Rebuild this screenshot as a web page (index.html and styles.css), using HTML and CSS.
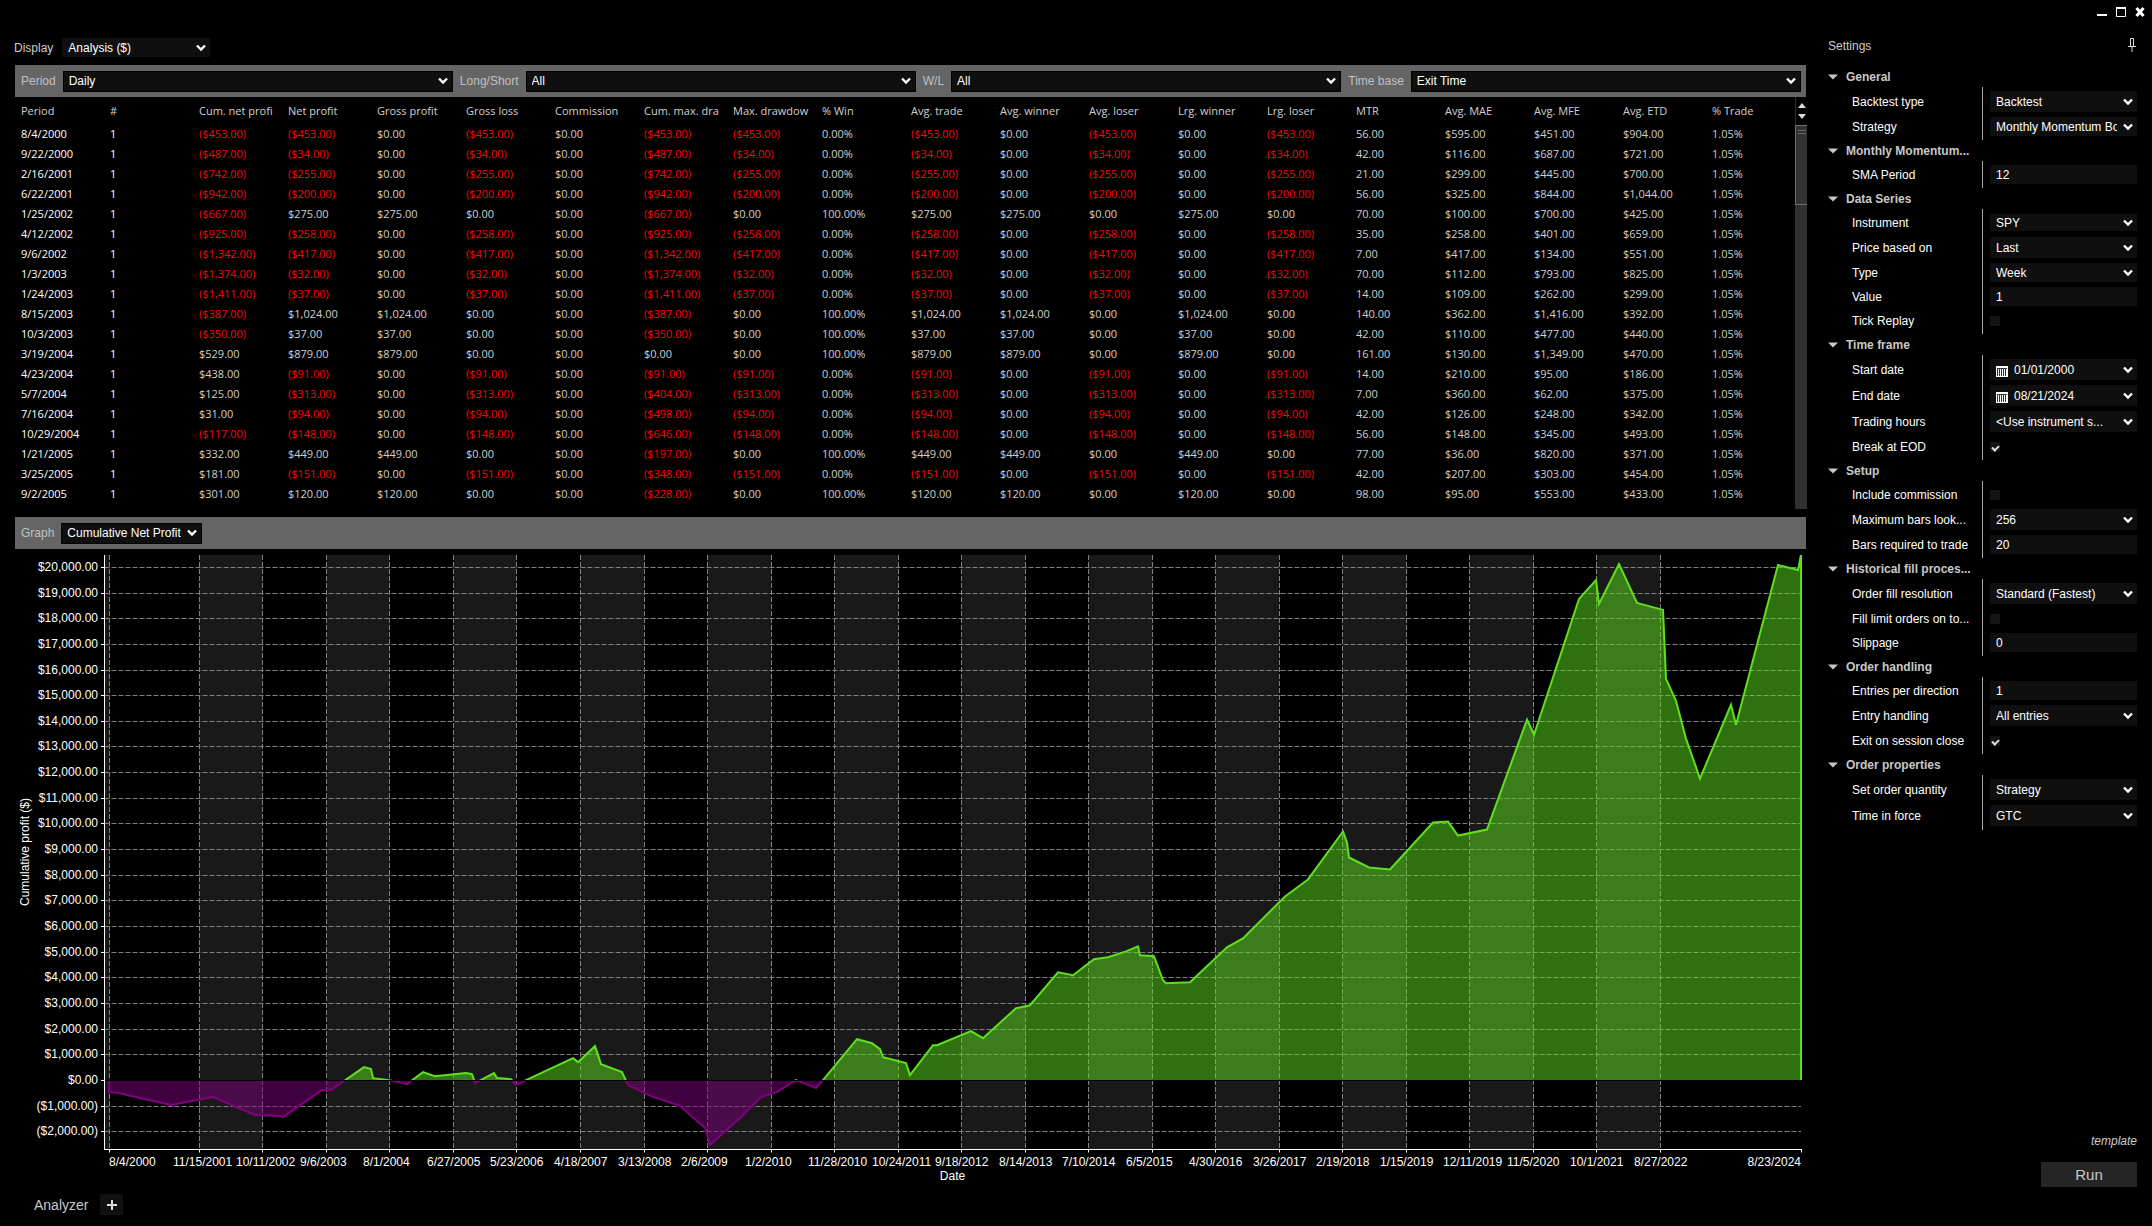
FILE: index.html
```html
<!DOCTYPE html>
<html lang="en">
<head>
<meta charset="utf-8">
<title>Analyzer</title>
<link rel="stylesheet" href="styles.css">
</head>
<body>
<svg class="sprite" aria-hidden="true">
  <symbol id="chevron" viewBox="0 0 10 8"><path d="M1 1.5 L5 5.5 L9 1.5" fill="none" stroke="#fff" stroke-width="2.4"/></symbol>
  <symbol id="triangle" viewBox="0 0 10 6"><path d="M0 .5 H10 L5 5.5 Z" fill="#c8c8c8"/></symbol>
  <symbol id="calendar" viewBox="0 0 12 11"><path d="M0 0H12V11H0Z" fill="#fff"/><path d="M1 2.5H11M1 4.5H11M1 6.5H11M1 8.5H11" stroke="#222" stroke-dasharray="1 1"/><path d="M1 3.5H11M1 5.5H11M1 7.5H11M1 9.5H11" stroke="#444" stroke-dasharray="1 1"/><path d="M1 2.5H11" stroke="#333"/></symbol>
</svg>

<header class="titlebar">
  <button class="win" aria-label="Minimize"><svg width="10" height="10"><path d="M0 8H10" stroke="#fff" stroke-width="2"/></svg></button>
  <button class="win" aria-label="Maximize"><svg width="10" height="10"><path d="M.5 .5H9.500V9.500H.5Z" fill="none" stroke="#fff"/><path d="M0 1H10" stroke="#fff" stroke-width="2"/></svg></button>
  <button class="win" aria-label="Close"><svg width="10" height="10"><path d="M1.500 1L8.500 9M8.500 1L1.500 9" stroke="#fff" stroke-width="3"/></svg></button>
</header>

<div class="layout">
  <main class="main">
    <div class="display">
      <label for="display">Display</label>
      <span class="pick display-pick"><select id="display"><option>Analysis ($)</option></select><svg><use href="#chevron"/></svg></span>
    </div>

    <div class="bar filters">
      <label for="period">Period</label>
      <span class="pick framed"><select id="period"><option>Daily</option></select><svg><use href="#chevron"/></svg></span>
      <label for="side">Long/Short</label>
      <span class="pick framed"><select id="side"><option>All</option></select><svg><use href="#chevron"/></svg></span>
      <label for="wl">W/L</label>
      <span class="pick framed"><select id="wl"><option>All</option></select><svg><use href="#chevron"/></svg></span>
      <label for="timebase">Time base</label>
      <span class="pick framed"><select id="timebase"><option>Exit Time</option></select><svg><use href="#chevron"/></svg></span>
    </div>

    <div class="results">
      <table class="trades">
        <thead><tr>
          <th>Period</th><th>#</th><th>Cum. net profi</th><th>Net profit</th><th>Gross profit</th><th>Gross loss</th><th>Commission</th><th>Cum. max. dra</th><th>Max. drawdow</th><th>% Win</th><th>Avg. trade</th><th>Avg. winner</th><th>Avg. loser</th><th>Lrg. winner</th><th>Lrg. loser</th><th>MTR</th><th>Avg. MAE</th><th>Avg. MFE</th><th>Avg. ETD</th><th>% Trade</th>
        </tr></thead>
        <tbody id="rows"></tbody>
      </table>
      <div class="scroll">
        <div class="scroll-arrows">
          <svg width="8" height="5"><path d="M0 5H8L4 0Z" fill="#ddd"/></svg>
          <svg width="8" height="5"><path d="M0 0H8L4 5Z" fill="#ddd"/></svg>
        </div>
        <div class="scroll-thumb"></div>
      </div>
    </div>

    <div class="bar graphbar">
      <label for="graph">Graph</label>
      <span class="pick framed"><select id="graph"><option>Cumulative Net Profit</option></select><svg><use href="#chevron"/></svg></span>
    </div>

    <div class="chart" id="chart"></div>

    <footer class="tabs">
      <span>Analyzer</span>
      <button class="add" aria-label="Add tab"><svg width="10" height="10"><path d="M5 0V10M0 5H10" stroke="#ddd" stroke-width="2"/></svg></button>
    </footer>
  </main>

  <aside class="settings">
    <div class="settings-head">
      <span>Settings</span>
      <svg width="8" height="14"><path d="M2.500 8V.5H5.500V8M0 8.500H8M4 9V14" fill="none" stroke="#ddd"/></svg>
    </div>

    <h2><svg><use href="#triangle"/></svg>General</h2>
    <div class="group">
      <div class="row tall"><label for="s1">Backtest type</label><span class="pick"><select id="s1"><option>Backtest</option></select><svg><use href="#chevron"/></svg></span></div>
      <div class="row"><label for="s2">Strategy</label><span class="pick"><select id="s2"><option>Monthly Momentum Bo</option></select><svg><use href="#chevron"/></svg></span></div>
    </div>

    <h2><svg><use href="#triangle"/></svg>Monthly Momentum...</h2>
    <div class="group">
      <div class="row"><label for="s3">SMA Period</label><input type="text" id="s3" value="12"></div>
    </div>

    <h2><svg><use href="#triangle"/></svg>Data Series</h2>
    <div class="group">
      <div class="row"><label for="s4">Instrument</label><span class="pick short"><select id="s4"><option>SPY</option></select><svg><use href="#chevron"/></svg></span></div>
      <div class="row tall"><label for="s5">Price based on</label><span class="pick"><select id="s5"><option>Last</option></select><svg><use href="#chevron"/></svg></span></div>
      <div class="row"><label for="s6">Type</label><span class="pick"><select id="s6"><option>Week</option></select><svg><use href="#chevron"/></svg></span></div>
      <div class="row"><label for="s7">Value</label><input type="text" id="s7" value="1"></div>
      <div class="row"><label for="s8">Tick Replay</label><input type="checkbox" id="s8"></div>
    </div>

    <h2><svg><use href="#triangle"/></svg>Time frame</h2>
    <div class="group">
      <div class="row tall"><label for="s9">Start date</label><span class="pick date"><svg class="cal"><use href="#calendar"/></svg><input type="text" id="s9" value="01/01/2000"><svg><use href="#chevron"/></svg></span></div>
      <div class="row tall"><label for="s10">End date</label><span class="pick date"><svg class="cal"><use href="#calendar"/></svg><input type="text" id="s10" value="08/21/2024"><svg><use href="#chevron"/></svg></span></div>
      <div class="row tall"><label for="s11">Trading hours</label><span class="pick"><select id="s11"><option>&lt;Use instrument s...</option></select><svg><use href="#chevron"/></svg></span></div>
      <div class="row"><label for="s12">Break at EOD</label><input type="checkbox" id="s12" checked></div>
    </div>

    <h2><svg><use href="#triangle"/></svg>Setup</h2>
    <div class="group">
      <div class="row"><label for="s13">Include commission</label><input type="checkbox" id="s13"></div>
      <div class="row tall"><label for="s14">Maximum bars look...</label><span class="pick"><select id="s14"><option>256</option></select><svg><use href="#chevron"/></svg></span></div>
      <div class="row"><label for="s15">Bars required to trade</label><input type="text" id="s15" value="20"></div>
    </div>

    <h2><svg><use href="#triangle"/></svg>Historical fill proces...</h2>
    <div class="group">
      <div class="row tall"><label for="s16">Order fill resolution</label><span class="pick"><select id="s16"><option>Standard (Fastest)</option></select><svg><use href="#chevron"/></svg></span></div>
      <div class="row"><label for="s17">Fill limit orders on to...</label><input type="checkbox" id="s17"></div>
      <div class="row"><label for="s18">Slippage</label><input type="text" id="s18" value="0"></div>
    </div>

    <h2><svg><use href="#triangle"/></svg>Order handling</h2>
    <div class="group">
      <div class="row"><label for="s19">Entries per direction</label><input type="text" id="s19" value="1"></div>
      <div class="row tall"><label for="s20">Entry handling</label><span class="pick"><select id="s20"><option>All entries</option></select><svg><use href="#chevron"/></svg></span></div>
      <div class="row"><label for="s21">Exit on session close</label><input type="checkbox" id="s21" checked></div>
    </div>

    <h2><svg><use href="#triangle"/></svg>Order properties</h2>
    <div class="group">
      <div class="row tall"><label for="s22">Set order quantity</label><span class="pick"><select id="s22"><option>Strategy</option></select><svg><use href="#chevron"/></svg></span></div>
      <div class="row tall"><label for="s23">Time in force</label><span class="pick"><select id="s23"><option>GTC</option></select><svg><use href="#chevron"/></svg></span></div>
    </div>

    <div class="actions">
      <a href="#" class="template">template</a>
      <button class="run">Run</button>
    </div>
  </aside>
</div>
<script src="app.js"></script>
</body>
</html>
```
FILE: styles.css
```css
* { box-sizing: border-box; }

body {
  margin: 0;
  min-height: 100vh;
  display: flex;
  flex-direction: column;
  background: #000;
  color: #fff;
  font: 12px/16px "Liberation Sans", Arial, sans-serif;
}

button, select, input { font: inherit; color: inherit; margin: 0; border: 0; border-radius: 0; }
button { padding: 0; background: none; display: grid; place-items: center; }
svg { display: block; }
.sprite { position: absolute; width: 0; height: 0; }

.titlebar {
  display: flex;
  justify-content: flex-end;
  align-items: center;
  gap: 9px;
  height: 24px;
  padding-right: 7px;
}

.layout {
  flex: 1;
  display: grid;
  grid-template-columns: minmax(0, 1fr) 345px;
}

.main { display: flex; flex-direction: column; padding-top: 14px; }

/* Drop-downs */
.pick { position: relative; display: block; height: 100%; background: #0f0f0f; }
.pick select, .pick input {
  display: block;
  appearance: none;
  width: 100%;
  height: 100%;
  padding: 0 20px 0 6px;
  background: none;
  overflow: hidden;
}
.pick svg { position: absolute; right: 4px; top: calc(50% - 4px); width: 10px; height: 8px; pointer-events: none; }
.pick.short { height: 17px; }
.pick.date input { padding-left: 24px; }
.pick .cal { left: 6px; top: calc(50% - 4px); width: 12px; height: 11px; }
.pick.framed { height: 21px; border: 1px solid #000; }
.pick.framed select { padding-left: 5px; }

.display { display: flex; align-items: center; gap: 9px; height: 19px; padding-left: 14px; color: #ccc; }
.display-pick { width: 148px; color: #fff; }

.bar {
  display: flex;
  align-items: center;
  gap: 7px;
  height: 32px;
  margin: 8px 1px 0 15px;
  padding: 0 5px 0 6px;
  background: #656565;
}
.bar label { color: #c0c0c0; }
.filters .pick { flex: 1; }

/* Results table */
.results { display: flex; margin-left: 15px; }
.trades {
  flex: 1;
  width: 100%;
  min-width: 0;
  align-self: flex-start;
  table-layout: fixed;
  border-collapse: collapse;
  margin-bottom: 5px;
  color: #d0d0d0;
  font: 11px/20px "Open Sans", "Noto Sans", sans-serif;
}
.trades th { height: 27px; font-weight: 400; text-align: left; }
.trades th, .trades td { padding: 0 4px 0 6px; overflow: hidden; white-space: nowrap; }
.trades td { height: 20px; }
.trades td:nth-child(-n+2) { color: #fff; }
.trades td.neg { color: #f00; }

.scroll { flex: none; width: 12px; display: flex; flex-direction: column; background: #303030; }
.scroll-arrows {
  display: flex;
  flex-direction: column;
  align-items: center;
  justify-content: space-evenly;
  height: 28px;
  background: #000;
  border-left: 1px solid #303030;
}
.scroll-thumb {
  height: 80px;
  background: linear-gradient(#666 0 0) center 4px / 8px 1px no-repeat,
              linear-gradient(#666 0 0) center 7px / 8px 1px no-repeat, #333;
  border: 1px solid #707070;
  border-right: 0;
}

/* Chart */
.chart { flex: 1; min-height: 400px; margin-top: 6px; position: relative; }
.chart svg { position: absolute; inset: 0; width: 100%; height: 100%; }
.chart text { fill: #fff; font: 12px "Liberation Sans", Arial, sans-serif; }
.band { fill: #191919; }
.grid { stroke: #808080; fill: none; stroke-dasharray: 5 2; }
.axis { stroke: #fff; fill: none; }
.zero { stroke: #000; }
.gain { fill: #5ee01e; fill-opacity: .5; stroke: #5ee01e; stroke-width: 2; }
.loss { fill: #800080; fill-opacity: .5; stroke: #800080; stroke-width: 2; }

.tabs { display: flex; align-items: center; gap: 12px; padding: 9px 0 11px 34px; font-size: 14px; color: #c8c8c8; }
.add { width: 23px; height: 21px; background: #111; }

/* Settings */
.settings { display: flex; flex-direction: column; padding: 14px 15px 39px 21px; }
.settings-head { display: flex; justify-content: space-between; height: 28px; padding-right: 1px; color: #ccc; }
.settings h2 {
  display: flex;
  align-items: center;
  gap: 8px;
  height: 21px;
  margin: 0;
  font-size: 12px;
  color: #c8c8c8;
}
.settings h2 svg { width: 10px; height: 6px; }
.group {
  display: grid;
  gap: 5px;
  padding: 4px 0;
  margin-left: 24px;
  background: linear-gradient(90deg, transparent 130px, #aaa 130px 131px, transparent 131px);
}
.row { display: grid; grid-template-columns: 138px 1fr; align-items: center; height: 19px; }
.row.tall { height: 21px; }
.row input[type="text"] { width: 100%; height: 100%; padding-left: 6px; background: #0f0f0f; }
.row .date input[type="text"] { padding-left: 24px; background: none; }
.row input[type="checkbox"] { appearance: none; width: 10px; height: 10px; background: #141414; }
.row input[type="checkbox"]:checked::after {
  content: "";
  display: block;
  width: 5px;
  height: 3px;
  margin: 3px 0 0 2px;
  border: solid #ddd;
  border-width: 0 0 2px 2px;
  transform: rotate(-45deg);
}

.actions { margin-top: auto; display: flex; flex-direction: column; align-items: flex-end; gap: 13px; }
.template { color: #ccc; font-style: italic; text-decoration: none; }
.run { width: 96px; height: 25px; background: #252525; color: #c8c8c8; font-size: 15px; }
```
FILE: app.js
```js
// period, cumulative net, net, cumulative drawdown, MTR, MAE, MFE, ETD
const trades = [
  ["8/4/2000", -453, -453, -453, 56, 595, 451, 904],
  ["9/22/2000", -487, -34, -487, 42, 116, 687, 721],
  ["2/16/2001", -742, -255, -742, 21, 299, 445, 700],
  ["6/22/2001", -942, -200, -942, 56, 325, 844, 1044],
  ["1/25/2002", -667, 275, -667, 70, 100, 700, 425],
  ["4/12/2002", -925, -258, -925, 35, 258, 401, 659],
  ["9/6/2002", -1342, -417, -1342, 7, 417, 134, 551],
  ["1/3/2003", -1374, -32, -1374, 70, 112, 793, 825],
  ["1/24/2003", -1411, -37, -1411, 14, 109, 262, 299],
  ["8/15/2003", -387, 1024, -387, 140, 362, 1416, 392],
  ["10/3/2003", -350, 37, -350, 42, 110, 477, 440],
  ["3/19/2004", 529, 879, 0, 161, 130, 1349, 470],
  ["4/23/2004", 438, -91, -91, 14, 210, 95, 186],
  ["5/7/2004", 125, -313, -404, 7, 360, 62, 375],
  ["7/16/2004", 31, -94, -498, 42, 126, 248, 342],
  ["10/29/2004", -117, -148, -646, 56, 148, 345, 493],
  ["1/21/2005", 332, 449, -197, 77, 36, 820, 371],
  ["3/25/2005", 181, -151, -348, 42, 207, 303, 454],
  ["9/2/2005", 301, 120, -228, 98, 95, 553, 433],
];

const money = (v) => {
  const s = "$" + Math.abs(v).toLocaleString("en-US", { minimumFractionDigits: 2 });
  return v < 0 ? `(${s})` : s;
};
const cash = (v) => `<td${v < 0 ? ' class="neg"' : ""}>${money(v)}</td>`;
const cell = (t) => `<td>${t}</td>`;

document.getElementById("rows").innerHTML = trades.map(([day, cum, net, dd, mtr, mae, mfe, etd]) => {
  const win = Math.max(net, 0), loss = Math.min(net, 0);
  return "<tr>" + cell(day) + cell(1) + cash(cum) + cash(net) + cash(win) + cash(loss) + cash(0) +
    cash(dd) + cash(loss) + cell(net > 0 ? "100.00%" : "0.00%") + cash(net) + cash(win) + cash(loss) +
    cash(win) + cash(loss) + cell(mtr.toFixed(2)) + cash(mae) + cash(mfe) + cash(etd) + cell("1.05%") + "</tr>";
}).join("");

// Equity curve in chart units: x 104..1801, y 0..595 measured from 555, zero profit at 1081.
const curve = `109,1093 119,1094 144,1100 171,1106 213,1098 255,1116 280,1117 283,1118 322,1091 331,1091
364,1068 371,1070 373,1079 389,1081 407,1085 423,1073 435,1077 466,1074 472,1075 475,1084 494,1074 497,1079
511,1080 516,1086 526,1081 573,1059 578,1063 595,1047 601,1065 622,1073 628,1086 651,1097 680,1107 705,1129
710,1146 740,1119 761,1098 777,1093 796,1081 816,1089 823,1081 857,1040 872,1044 880,1050 883,1058 906,1064
910,1076 933,1046 937,1046 971,1032 983,1039 1016,1009 1030,1006 1058,973 1073,976 1094,960 1108,958 1126,952
1138,947 1140,956 1154,957 1163,981 1166,984 1190,983 1227,948 1243,939 1285,897 1308,880 1343,832 1347,843
1349,858 1369,868 1390,870 1433,823 1448,822 1458,836 1487,830 1527,720 1534,735 1579,599 1596,580 1599,604
1619,564 1637,603 1663,610 1666,679 1676,701 1686,739 1700,779 1731,705 1736,725 1778,565 1798,570 1801,555`
  .trim().split(/\s+/).map((p) => p.split(",").map(Number));

const dates = ["11/15/2001", "10/11/2002", "9/6/2003", "8/1/2004", "6/27/2005", "5/23/2006", "4/18/2007",
  "3/13/2008", "2/6/2009", "1/2/2010", "11/28/2010", "10/24/2011", "9/18/2012", "8/14/2013", "7/10/2014",
  "6/5/2015", "4/30/2016", "3/26/2017", "2/19/2018", "1/15/2019", "12/11/2019", "11/5/2020", "10/1/2021", "8/27/2022"];

function drawChart() {
  const box = document.getElementById("chart");
  const W = box.clientWidth, H = box.clientHeight;
  const left = 104, right = W - 6, bottom = H - 36;
  const X = (x) => left + (x - 104) * (right - left) / 1697;
  const Y = (y) => (y - 555) * bottom / 595;
  const snap = (v) => Math.floor(v) + 0.5;
  const line = (x1, y1, x2, y2, c) => `<line x1="${x1}" y1="${y1}" x2="${x2}" y2="${y2}" class="${c}"/>`;
  const text = (x, y, s, anchor, extra = "") => `<text x="${x}" y="${y}" text-anchor="${anchor}" ${extra}>${s}</text>`;
  const zero = snap(Y(1081));
  const axis = snap(left), base = snap(bottom);
  const xs = dates.map((_, i) => snap(X(199.3 + i * 63.53)));
  let out = `<defs><clipPath id="up"><rect x="0" y="0" width="${W}" height="${zero - 0.5}"/></clipPath>
    <clipPath id="down"><rect x="0" y="${zero + 0.5}" width="${W}" height="${H}"/></clipPath></defs>`;

  const first = snap(X(109));
  out += `<rect class="band" x="${axis}" y="0" width="${first - axis}" height="${bottom}"/>`;
  for (let i = 0; i < xs.length - 1; i += 2)
    out += `<rect class="band" x="${xs[i]}" y="0" width="${xs[i + 1] - xs[i]}" height="${bottom}"/>`;

  for (let v = 20; v >= -2; v--) {
    const y = snap(Y(1081.4 - v * 25.7));
    if (v !== 0) out += line(axis, y, right, y, "grid");
    out += line(101, y, axis, y, "axis") + text(98, y + 3.5, money(v * 1000), "end");
  }
  for (const x of [first, ...xs]) out += line(x, 0, x, bottom, "grid") + line(x, base, x, base + 3, "axis");

  const d = `M${X(109)} ${zero} ` + curve.map(([x, y]) => `L${X(x)} ${Y(y)}`).join(" ") + ` L${right} ${zero}`;
  out += `<path class="gain" clip-path="url(#up)" d="${d}"/><path class="loss" clip-path="url(#down)" d="${d}"/>`;
  out += line(axis + 1, zero, right, zero, "zero");
  out += line(axis, 0, axis, base, "axis") + line(axis - 0.5, base, right + 1, base, "axis") + line(right + 0.5, base, right + 0.5, base + 3, "axis");

  const ly = bottom + 17;
  out += text(left + 5, ly, "8/4/2000", "start") + text(right, ly, "8/23/2024", "end");
  dates.forEach((s, i) => { out += text(xs[i] - 26.5, ly, s, "start"); });
  out += text((left + right) / 2, bottom + 31, "Date", "middle");
  const my = bottom / 2;
  out += text(29, my, "Cumulative profit ($)", "middle", `transform="rotate(-90 29 ${my})"`);
  box.innerHTML = `<svg>${out}</svg>`;
}
drawChart();
addEventListener("resize", drawChart);
```
